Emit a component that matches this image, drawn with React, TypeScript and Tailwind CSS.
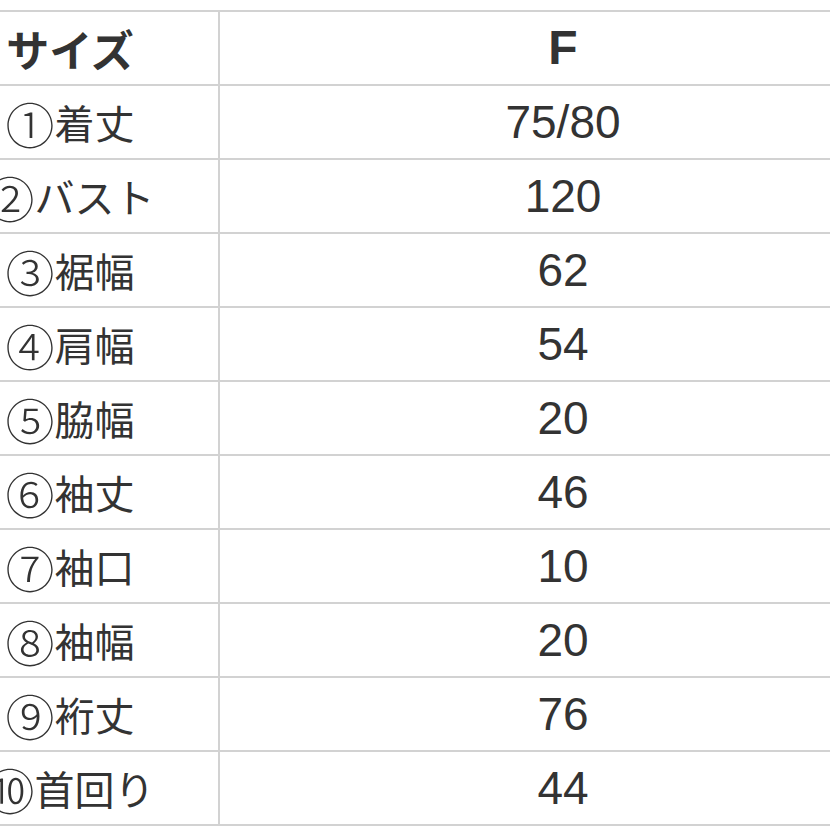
const rows: [string, string, string][] = [
  ["①", "着丈", "75/80"],
  ["②", "バスト", "120"],
  ["③", "裾幅", "62"],
  ["④", "肩幅", "54"],
  ["⑤", "脇幅", "20"],
  ["⑥", "袖丈", "46"],
  ["⑦", "袖口", "10"],
  ["⑧", "袖幅", "20"],
  ["⑨", "裄丈", "76"],
  ["⑩", "首回り", "44"],
];

export default function App() {
  return (
    <div
      className="w-[830px] h-[830px] overflow-hidden bg-white text-[#333]"
      style={{ fontFamily: '"Noto Sans CJK JP", "Noto Sans", sans-serif' }}
    >
      <div className="ml-[-78px] mt-[10px] w-[984px] border-t-2 border-b-2 border-[#d2d2d2]">
        <div className="flex h-[74px] border-b-2 border-[#d2d2d2]">
          <div className="w-[298px] flex items-center justify-center border-r-2 border-[#d2d2d2] text-[43px] font-bold">
            サイズ
          </div>
          <div className="flex-1 flex items-center justify-center text-[48px] font-bold font-['Liberation_Sans',sans-serif]">
            F
          </div>
        </div>
        {rows.map(([num, label, value], i) => (
          <div
            key={label}
            className={
              "flex " +
              (i < rows.length - 1 ? "h-[74px] border-b-2 border-[#d2d2d2]" : "h-[72px]")
            }
          >
            <div className="w-[298px] flex items-center justify-center border-r-2 border-[#d2d2d2] text-[40px] leading-none">
              <span className="text-[49px] font-light leading-none">{num}</span>
              <span>{label}</span>
            </div>
            <div className="flex-1 flex items-center justify-center text-[46px] font-['Liberation_Sans',sans-serif]">
              {value}
            </div>
          </div>
        ))}
      </div>
    </div>
  );
}
